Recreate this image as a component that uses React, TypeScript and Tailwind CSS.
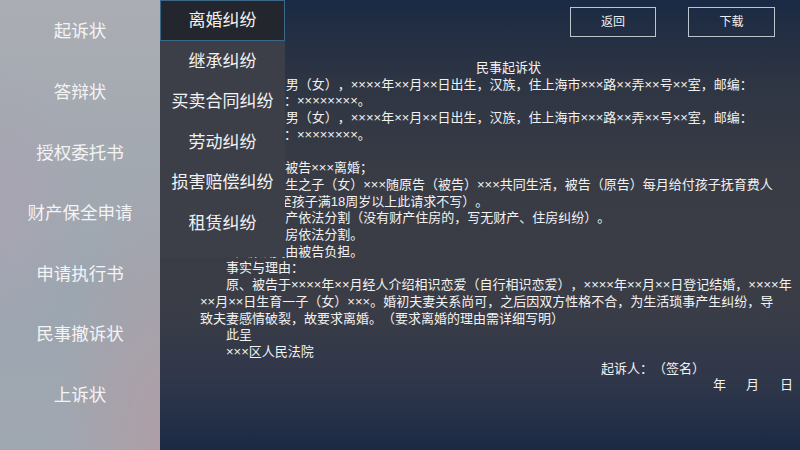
import React from "react";

const sideItems = ["起诉状", "答辩状", "授权委托书", "财产保全申请", "申请执行书", "民事撤诉状", "上诉状"];
const menuItems = ["离婚纠纷", "继承纠纷", "买卖合同纠纷", "劳动纠纷", "损害赔偿纠纷", "租赁纠纷"];

// each line of the sample complaint, with its own left offset
const docLines: { text: string; pad: string }[] = [
    { text: "民事起诉状", pad: "pl-[276px]" },
    { text: "原告：×××，男（女），××××年××月××日出生，汉族，住上海市×××路××弄××号××室，邮编：", pad: "pl-[11px]" },
    { text: "联系电话：××××××××。", pad: "pl-[32px]" },
    { text: "被告：×××，男（女），××××年××月××日出生，汉族，住上海市×××路××弄××号××室，邮编：", pad: "pl-[11px]" },
    { text: "联系电话：××××××××。", pad: "pl-[32px]" },
    { text: "诉讼请求：", pad: "pl-0" },
    { text: "1、原告与被告×××离婚；", pad: "pl-[26px]" },
    { text: "2、婚后所生之子（女）×××随原告（被告）×××共同生活，被告（原告）每月给付孩子抚育费人", pad: "pl-[26px]" },
    { text: "民币×××元（至孩子满18周岁以上此请求不写）。", pad: "pl-[4px]" },
    { text: "3、共同财产依法分割（没有财产住房的，写无财产、住房纠纷）。", pad: "pl-[26px]" },
    { text: "4、共同住房依法分割。", pad: "pl-[26px]" },
    { text: "5、诉讼费由被告负担。", pad: "pl-[26px]" },
    { text: "事实与理由：", pad: "pl-[26px]" },
    { text: "原、被告于××××年××月经人介绍相识恋爱（自行相识恋爱），××××年××月××日登记结婚，××××年", pad: "pl-[26px]" },
    { text: "××月××日生育一子（女）×××。婚初夫妻关系尚可，之后因双方性格不合，为生活琐事产生纠纷，导", pad: "pl-0" },
    { text: "致夫妻感情破裂，故要求离婚。（要求离婚的理由需详细写明）", pad: "pl-0" },
    { text: "此呈", pad: "pl-[26px]" },
    { text: "×××区人民法院", pad: "pl-[26px]" },
    { text: "起诉人：（签名）", pad: "pl-[401px]" },
];

const Sidebar: React.FC = () => (
    <aside className="w-[160px] h-full shrink-0 flex flex-col pt-[1px] [background:radial-gradient(ellipse_at_100%_100%,#ae9ea6_0%,rgba(174,158,166,0)_45%),radial-gradient(ellipse_at_0%_45%,#a8a4b2_0%,rgba(168,164,178,0)_40%),linear-gradient(180deg,#aaadb3_0%,#a3a9b1_35%,#9ca6b0_65%,#a0a7b1_100%)]">
        {sideItems.map((item) => (
            <div key={item} className="h-[60.67px] flex items-center justify-center text-[17.5px] text-[#f4f4f4]">
                {item}
            </div>
        ))}
    </aside>
);

const Dropdown: React.FC = () => (
    <div className="absolute left-0 top-0 w-[125px] h-[257px] bg-[#3c3f48] flex flex-col">
        {menuItems.map((item, i) => (
            <div
                key={item}
                className={
                    i === 0
                        ? "h-[41px] flex items-center justify-center bg-[#23262c] border border-[#3b6889] text-[17px] text-[#f2f2f2]"
                        : "h-[40.5px] flex items-center justify-center text-[17px] text-[#f2f2f2]"
                }
            >
                {item}
            </div>
        ))}
    </div>
);

export default function App() {
    return (
        <div className="w-[800px] h-[450px] flex overflow-hidden [text-spacing-trim:space-all] font-['Liberation_Sans','Noto_Sans_CJK_SC',sans-serif]">
            <Sidebar />
            <main className="relative flex-1 h-full flex flex-col bg-[linear-gradient(180deg,#1a2a44_0%,#2e3543_18%,#393c45_40%,#3a3d46_68%,#30374a_84%,#1b2a45_100%)]">
                <div className="flex justify-end gap-[32px] pt-[7px] pr-[25px]">
                    <button className="w-[86px] h-[30px] border border-[#bcc4cc] text-[12px] text-[#eeeeee]">返回</button>
                    <button className="w-[87px] h-[30px] border border-[#bcc4cc] text-[12px] text-[#eeeeee]">下载</button>
                </div>
                <div className="mt-[23px] ml-[40px] text-[13px] leading-[16.7px] text-[#f2f2f2] whitespace-nowrap">
                    {docLines.map((line, i) => (
                        <div key={i} className={line.pad}>
                            {line.text}
                        </div>
                    ))}
                    <div className="pl-[513px] flex">
                        <span>年</span>
                        <span className="ml-[20px]">月</span>
                        <span className="ml-[21px]">日</span>
                    </div>
                </div>
                <Dropdown />
            </main>
        </div>
    );
}
